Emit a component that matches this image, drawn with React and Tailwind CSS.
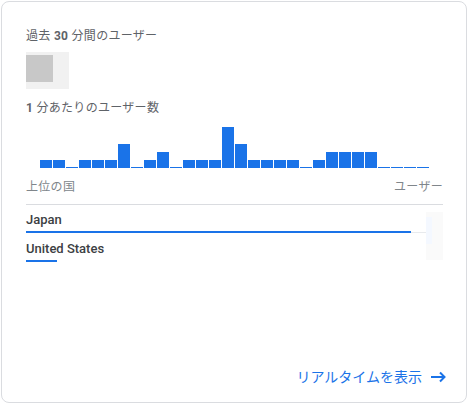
const bars = [1, 1, 0, 1, 1, 1, 3, 0, 1, 2, 0, 1, 1, 1, 5, 3, 1, 1, 1, 1, 0, 1, 2, 2, 2, 2, 0, 0, 0, 0]
const heights = { 0: 1, 1: 8, 2: 16, 3: 24, 5: 41 }

const countries = [
  { name: 'Japan', pct: 96.25, track: true },
  { name: 'United States', pct: 7.75, track: false },
]

function ArrowRight() {
  return (
    <svg width="16" height="12" viewBox="0 0 16 12" className="text-[#1a73e8]">
      <path d="M0 6h14M9 1.5l4.5 4.5L9 10.5" fill="none" stroke="currentColor" strokeWidth="2" />
    </svg>
  )
}

export default function App() {
  return (
    <div className="p-px font-['Roboto','Noto_Sans_CJK_JP',sans-serif]">
      <div className="w-[466px] h-[402px] border border-[#dadce0] rounded-lg flex flex-col pl-[24px] pr-[23px] pt-[26px] pb-[15px]">
        {/* Users in last 30 min */}
        <div className="text-[12px] leading-4 text-[#5f6368] tracking-[0.3px]">
          過去 <span className="font-bold">30</span> 分間のユーザー
        </div>
        <div className="mt-[8px] w-[43px] h-[37px] bg-[#f1f1f1] pt-[3px]">
          <div className="w-[27px] h-[27px] bg-[#c8c8c8]" />
        </div>

        <div className="mt-[11px] text-[12px] leading-4 text-[#5f6368] tracking-[0.3px]">
          <span className="font-bold">1</span> 分あたりのユーザー数
        </div>

        {/* Chart */}
        <div className="mt-[10px] h-[42px] flex items-end justify-center gap-px">
          {bars.map((v, i) => (
            <div key={i} className="w-[12px] bg-[#1a73e8]" style={{ height: heights[v] }} />
          ))}
        </div>

        {/* Top countries */}
        <div className="mt-[11px] pb-[9px] border-b border-[#dadce0] flex justify-between text-[12px] leading-4 text-[#80868b] tracking-[0.3px]">
          <span>上位の国</span>
          <span>ユーザー</span>
        </div>

        <div className="flex">
          <div className="w-[400px] flex flex-col">
            {countries.map((c, i) => (
              <div key={c.name} className={i === 0 ? 'mt-[7px]' : 'mt-[8px]'}>
                <div className="text-[13px] leading-4 font-medium text-[#3c4043]">{c.name}</div>
                <div className={`mt-[3px] h-[2px] ${c.track ? 'border-b border-[#e8eaed]' : ''}`}>
                  <div className="h-[2px] bg-[#1a73e8]" style={{ width: `${c.pct}%` }} />
                </div>
              </div>
            ))}
          </div>
          <div className="mt-[7px] w-[17px] h-[48px] bg-[#fafafa] flex">
            <div className="mt-[5px] w-[6px] h-[27px] bg-[#f4f8ff]" />
          </div>
        </div>

        <div className="mt-auto mr-[-4px] flex justify-end items-center gap-[9px] text-[14px] leading-5 text-[#1a73e8]">
          <span>リアルタイムを表示</span>
          <ArrowRight />
        </div>
      </div>
    </div>
  )
}
